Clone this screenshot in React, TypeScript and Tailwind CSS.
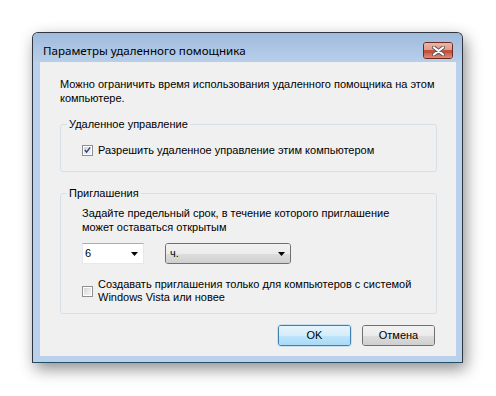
import React from "react";

const F = { fontFamily: '"Liberation Sans", Arial, sans-serif' };

function Check({ checked }: { checked?: boolean }) {
  return (
    <div className="w-[11px] h-[11px] shrink-0 border border-[#8f8f8f] bg-white p-[1px]">
      <div className="w-full h-full bg-gradient-to-br from-[#d2d2d2] via-[#e8e8e8] to-[#f4f4f4] flex items-center justify-center">
        {checked && (
          <svg width="8" height="8" viewBox="0 0 8 8">
            <path d="M1 4 L3 6.5 L7 1" fill="none" stroke="#2a3f8f" strokeWidth="1.6" />
          </svg>
        )}
      </div>
    </div>
  );
}

function Arrow() {
  return (
    <svg width="7" height="4" viewBox="0 0 7 4">
      <path d="M0 0 H7 L3.5 4 Z" fill="#000" />
    </svg>
  );
}

export default function App() {
  return (
    <div className="w-[496px] h-[396px] bg-white pt-[32px] pl-[32px]" style={F}>
      <div className="w-[431px] h-[331px] rounded-t-[6px] border border-[#2f3640] border-b-[#1f4f63] bg-[#b9d1ea] flex flex-col shadow-[3px_6px_16px_rgba(0,0,0,0.45)] overflow-hidden">
        <div className="h-[29px] shrink-0 flex items-start justify-between bg-gradient-to-b from-[#9fbbdc] to-[#b7cfea] pl-[10px] pr-[9px]">
          <span
            className="mt-[10px] text-[11.6px] leading-[16px] text-black"
            style={{ fontFamily: '"Noto Sans", "Open Sans", sans-serif' }}
          >
            Параметры удаленного помощника
          </span>
          <div className="mt-[9px] w-[30px] h-[17px] rounded-[3px] border border-[#6e2a20] overflow-hidden flex flex-col relative">
            <div className="h-[7px] bg-gradient-to-b from-[#efb4a6] to-[#e29a89]" />
            <div className="h-[3px] bg-[#c4503e]" />
            <div className="flex-1 bg-gradient-to-b from-[#cd6251] to-[#dc8a74]" />
            <div className="absolute inset-0 flex items-center justify-center">
              <svg width="13" height="10" viewBox="0 0 13 10">
                <path d="M2 1.5 L11 8.5 M11 1.5 L2 8.5" stroke="#5a5a5a" strokeWidth="4" strokeLinecap="round" />
                <path d="M2 1.5 L11 8.5 M11 1.5 L2 8.5" stroke="#ffffff" strokeWidth="2.2" strokeLinecap="round" />
              </svg>
            </div>
          </div>
        </div>
        <div className="flex-1 mx-[7px] mr-[6px] mb-[6px] bg-[#f0f0f0] flex flex-col text-[11px] text-black">
          <div className="pt-[15px] pl-[20px] leading-[14px] whitespace-nowrap">
            Можно ограничить время использования удаленного помощника на этом
            <br />
            компьютере.
          </div>
          <div className="relative mt-[19px] ml-[20px] w-[377px] h-[48px] border border-[#d5dfe5] rounded-[3px] pt-[18px] pl-[21px]">
            <span className="absolute -top-[8px] left-[6px] px-[2px] bg-[#f0f0f0] leading-[14px]">
              Удаленное управление
            </span>
            <div className="flex items-center gap-[5px] leading-[14px]">
              <Check checked />
              <span>Разрешить удаленное управление этим компьютером</span>
            </div>
          </div>
          <div className="relative mt-[21px] ml-[20px] w-[377px] h-[121px] border border-[#d5dfe5] rounded-[3px] pt-[12px] pl-[21px]">
            <span className="absolute -top-[8px] left-[6px] px-[2px] bg-[#f0f0f0] leading-[14px]">
              Приглашения
            </span>
            <div className="leading-[14px] whitespace-nowrap">
              Задайте предельный срок, в течение которого приглашение
              <br />
              может оставаться открытым
            </div>
            <div className="mt-[9px] flex gap-[21px]">
              <div className="w-[62px] h-[21px] bg-white border border-[#e3e9ef] border-t-[#abadb3] flex items-center justify-between pl-[2px] pr-[5px]">
                <span>6</span>
                <Arrow />
              </div>
              <div className="w-[126px] h-[21px] rounded-[3px] border border-[#707070] flex flex-col overflow-hidden relative">
                <div className="h-1/2 bg-gradient-to-b from-[#f2f2f2] to-[#ebebeb]" />
                <div className="h-1/2 bg-gradient-to-b from-[#dddddd] to-[#cfcfcf]" />
                <div className="absolute inset-0 flex items-center justify-between pl-[4px] pr-[5px]">
                  <span>ч.</span>
                  <Arrow />
                </div>
              </div>
            </div>
            <div className="mt-[14px] flex items-center gap-[5px]">
              <Check />
              <div className="leading-[13px] whitespace-nowrap">
                Создавать приглашения только для компьютеров с системой
                <br />
                Windows Vista или новее
              </div>
            </div>
          </div>
          <div className="mt-[11px] flex justify-end gap-[11px] pr-[21px]">
            <div className="w-[73px] h-[21px] rounded-[3px] border border-[#3c7fb1] flex flex-col overflow-hidden relative shadow-[0_0_0_1px_rgba(120,200,240,0.35)]">
              <div className="h-1/2 bg-gradient-to-b from-[#e5f4fc] to-[#d4ecfa]" />
              <div className="h-1/2 bg-gradient-to-b from-[#bde4fb] to-[#a9daf6]" />
              <div className="absolute inset-0 flex items-center justify-center">OK</div>
            </div>
            <div className="w-[73px] h-[21px] rounded-[3px] border border-[#707070] flex flex-col overflow-hidden relative">
              <div className="h-1/2 bg-gradient-to-b from-[#f2f2f2] to-[#ebebeb]" />
              <div className="h-1/2 bg-gradient-to-b from-[#dddddd] to-[#cfcfcf]" />
              <div className="absolute inset-0 flex items-center justify-center">Отмена</div>
            </div>
          </div>
        </div>
      </div>
    </div>
  );
}
